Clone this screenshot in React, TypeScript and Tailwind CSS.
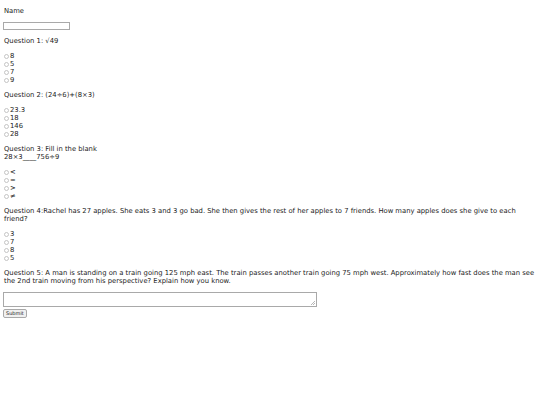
const questions = [
  {
    title: ["Question 1: \u221a49"],
    options: ["8", "5", "7", "9"],
  },
  {
    title: ["Question 2: (24\u00f76)+(8\u00d73)"],
    options: ["23.3", "18", "146", "28"],
  },
  {
    title: ["Question 3: Fill in the blank", "28\u00d73____756\u00f79"],
    options: ["<", "=", ">", "\u2260"],
  },
  {
    title: [
      "Question 4:Rachel has 27 apples. She eats 3 and 3 go bad. She then gives the rest of her apples to 7 friends. How many apples does she give to each friend?",
    ],
    options: ["3", "7", "8", "5"],
  },
];

function Radio({ label }: { label: string }) {
  return (
    <label className="flex items-center h-[8px]">
      <span className="w-[5px] h-[5px] ml-[1px] mr-[1px] rounded-full border border-[#c4c4c4] bg-white"></span>
      <span>{label}</span>
    </label>
  );
}

export default function App() {
  return (
    <div className="min-h-[405px] w-[540px] bg-white text-[#222] text-[6.8px] leading-[8px] pl-[3px] pr-[2px] py-[7px] font-['DejaVu_Sans',Verdana,sans-serif]">
      <p className="pl-[1px]">Name</p>
      <div className="mt-[7px] w-[67px] h-[8px] border border-[#a9a9a9] bg-white"></div>

      {questions.map((q, i) => (
        <div key={i}>
          <p className="mt-[7px] pl-[1px] pr-[14px]">
            {q.title.map((t, j) => (
              <span key={j} className="block">
                {t}
              </span>
            ))}
          </p>
          <div className="mt-[7px]">
            {q.options.map((o) => (
              <Radio key={o} label={o} />
            ))}
          </div>
        </div>
      ))}

      <p className="mt-[7px] pl-[1px]">
        Question 5: A man is standing on a train going 125 mph east. The train passes another train going 75 mph west. Approximately how fast does the man see the 2nd train moving from his perspective? Explain how you know.
      </p>
      <div className="relative mt-[7px] w-[314px] h-[15px] border border-[#a9a9a9] bg-white">
        <svg className="absolute right-[1px] bottom-[1px]" width="4" height="4" viewBox="0 0 4 4">
          <path d="M0 4L4 0M2 4L4 2" stroke="#999" strokeWidth="0.7" />
        </svg>
      </div>
      <button className="mt-[2px] flex items-center h-[9px] px-[2px] border border-[#a9a9a9] rounded-[2px] bg-[#f0f0f0] text-[5px] leading-[7px] text-[#222]">
        Submit
      </button>
    </div>
  );
}
